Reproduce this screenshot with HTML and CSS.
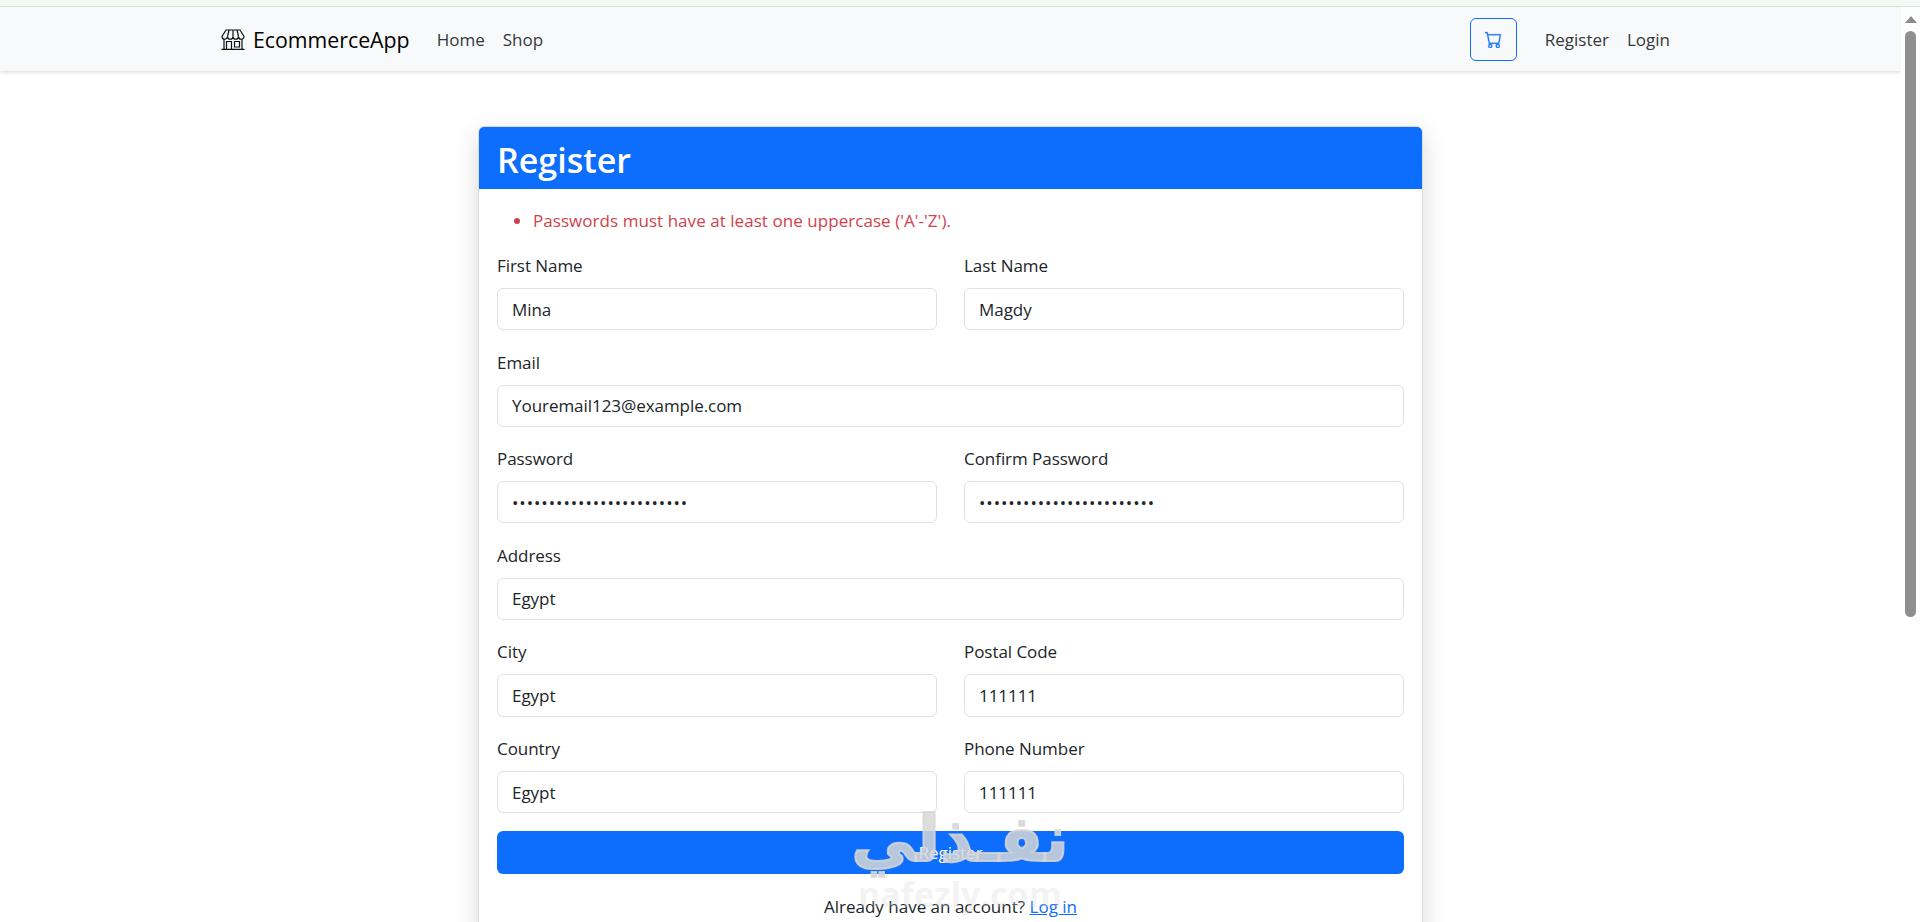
FILE: index.html
```html
<!DOCTYPE html>
<html lang="en">
<head>
<meta charset="UTF-8">
<meta name="viewport" content="width=device-width, initial-scale=1.0">
<title>Register | EcommerceApp</title>
<link rel="stylesheet" href="styles.css">
</head>
<body>
    <div class="top-strip"></div>
    <div class="window">
        <div class="page">
            <nav class="navbar">
                <a href="#" class="brand">
                    <svg class="brand-icon" viewBox="0 0 24 21" fill="none" stroke="#111" stroke-width="1.2">
                        <path d="M5 1h14l4 6.500a2.750 2.750 0 0 1-5.500 0 2.750 2.750 0 0 1-5.500 0 2.750 2.750 0 0 1-5.500 0 2.750 2.750 0 0 1-5.500 0z"/>
                        <path d="M6.500 7.500 8 1M12 7.500V1M17.500 7.500 16 1"/>
                        <path d="M3 10v10M21 10v10M0.500 20.400h23"/>
                        <path d="M5.500 20v-7.500h5V20M13.500 12.500h5v5.500h-5z"/>
                    </svg>
                    EcommerceApp
                </a>
                <a href="#" class="nav-link">Home</a>
                <a href="#" class="nav-link">Shop</a>
                <a href="#" class="cart-button">
                    <svg width="17" height="17" viewBox="0 0 16 16" fill="currentColor" stroke="currentColor" stroke-width="0.25">
                        <path d="M0 1.500A.5.5 0 0 1 .5 1H2a.5.5 0 0 1 .485.379L2.890 3H14.500a.5.5 0 0 1 .491.592l-1.500 8A.5.5 0 0 1 13 12H4a.5.5 0 0 1-.491-.408L2.010 3.607 1.610 2H.5a.5.5 0 0 1-.5-.5M3.102 4l1.313 7h8.170l1.313-7zM5 12a2 2 0 1 0 0 4 2 2 0 0 0 0-4m7 0a2 2 0 1 0 0 4 2 2 0 0 0 0-4m-7 1a1 1 0 1 1 0 2 1 1 0 0 1 0-2m7 0a1 1 0 1 1 0 2 1 1 0 0 1 0-2"/>
                    </svg>
                </a>
                <a href="#" class="nav-link">Register</a>
                <a href="#" class="nav-link">Login</a>
            </nav>

            <div class="card">
                <div class="card-header">
                    <h2>Register</h2>
                </div>
                <div class="card-body">
                    <ul class="errors">
                        <li>Passwords must have at least one uppercase ('A'-'Z').</li>
                    </ul>
                    <form class="register-form">
                        <div class="field">
                            <label for="first">First Name</label>
                            <input type="text" id="first" value="Mina">
                        </div>
                        <div class="field">
                            <label for="last">Last Name</label>
                            <input type="text" id="last" value="Magdy">
                        </div>
                        <div class="field wide">
                            <label for="email">Email</label>
                            <input type="email" id="email" value="Youremail123@example.com">
                        </div>
                        <div class="field">
                            <label for="password">Password</label>
                            <input type="password" id="password" value="Youremail123@example.com">
                        </div>
                        <div class="field">
                            <label for="confirm">Confirm Password</label>
                            <input type="password" id="confirm" value="Youremail123@example.com">
                        </div>
                        <div class="field wide">
                            <label for="address">Address</label>
                            <input type="text" id="address" value="Egypt">
                        </div>
                        <div class="field">
                            <label for="city">City</label>
                            <input type="text" id="city" value="Egypt">
                        </div>
                        <div class="field">
                            <label for="postal">Postal Code</label>
                            <input type="text" id="postal" value="111111">
                        </div>
                        <div class="field">
                            <label for="country">Country</label>
                            <input type="text" id="country" value="Egypt">
                        </div>
                        <div class="field">
                            <label for="phone">Phone Number</label>
                            <input type="text" id="phone" value="111111">
                        </div>
                        <button type="button" class="register-button wide">Register</button>
                    </form>
                    <p class="login-redirect">Already have an account? <a href="#">Log in</a></p>
                </div>
            </div>
        </div>

        <div class="scrollbar">
            <span class="scroll-arrow"></span>
            <span class="scroll-thumb"></span>
        </div>
    </div>

    <div class="watermark">
        <span class="watermark-logo" dir="rtl" lang="ar">نفـذلي</span>
        <span class="watermark-site">nafezly.com</span>
    </div>
</body>
</html>
```

FILE: styles.css
```css
html, body {
    height: 100%;
}

body {
    margin: 0;
    display: flex;
    flex-direction: column;
    overflow: hidden;
    background: #fff;
    color: #212529;
    font-family: "Open Sans", "Noto Sans", sans-serif;
    font-size: 17px;
}

a {
    text-decoration: none;
}

.top-strip {
    flex: none;
    height: 6px;
    background: #f3faf6;
    border-bottom: 1px solid #d5e3df;
}

.window {
    flex: 1;
    min-height: 0;
    display: flex;
}

.page {
    flex: 1;
    min-width: 0;
    overflow: hidden;
}

/* navbar */
.navbar {
    height: 64px;
    padding: 0 231px 0 221px;
    display: flex;
    align-items: center;
    background: #f8f9fa;
    box-shadow: 0 1px 4px rgba(0, 0, 0, 0.16);
}

.brand {
    display: flex;
    align-items: center;
    gap: 8px;
    margin-right: 27px;
    color: #000;
    font-size: 21.3px;
}

.brand-icon {
    width: 24px;
    height: 21px;
}

.nav-link {
    margin-right: 18px;
    color: #34383d;
}

.cart-button {
    width: 47px;
    height: 43px;
    box-sizing: border-box;
    margin-left: auto;
    margin-right: 28px;
    display: flex;
    align-items: center;
    justify-content: center;
    border: 1px solid #0d6efd;
    border-radius: 6px;
    color: #0d6efd;
}

.navbar .nav-link:last-child {
    margin-right: 0;
}

/* card */
.card {
    width: 945px;
    box-sizing: border-box;
    margin: 55px auto 0;
    border: 1px solid #dcdcdc;
    border-radius: 6px;
    box-shadow: 0 8px 24px rgba(0, 0, 0, 0.15);
}

.card-header {
    height: 62px;
    box-sizing: border-box;
    padding: 3px 18px 0;
    display: flex;
    align-items: center;
    background: #0d6efd;
    border-radius: 5px 5px 0 0;
    color: #fff;
}

.card-header h2 {
    margin: 0;
    font-size: 34px;
    font-weight: 600;
}

.card-body {
    padding: 19px 18px;
}

.errors {
    margin: 0 0 19px;
    padding-left: 36px;
    color: #d13f4d;
    line-height: 26px;
    letter-spacing: 0.05px;
}

.register-form {
    display: grid;
    grid-template-columns: 1fr 1fr;
    column-gap: 27px;
    row-gap: 19.3px;
}

.field {
    display: flex;
    flex-direction: column;
    letter-spacing: -0.05px;
}

.wide {
    grid-column: 1 / -1;
}

label {
    line-height: 26px;
    margin-bottom: 9px;
}

input {
    height: 42.3px;
    box-sizing: border-box;
    padding: 0 14px;
    border: 1px solid #dee2e6;
    border-radius: 6px;
    outline: none;
    background: #fff;
    color: #212529;
    font: inherit;
    letter-spacing: inherit;
}

input[type="password"] {
    letter-spacing: 0.95px;
}

.register-button {
    height: 43px;
    margin-top: -2px;
    border: none;
    border-radius: 6px;
    background: #0d6efd;
    color: #fff;
    font: inherit;
}

.login-redirect {
    margin: 20px 0 0;
    text-align: center;
    line-height: 26px;
}

.login-redirect a {
    color: #0d6efd;
    text-decoration: underline;
}

/* browser scrollbar */
.scrollbar {
    flex: none;
    width: 19px;
    display: flex;
    flex-direction: column;
    align-items: center;
    background: #fff;
}

.scroll-arrow {
    margin-top: 9px;
    border-left: 6px solid transparent;
    border-right: 6px solid transparent;
    border-bottom: 7px solid #8c8c8c;
}

.scroll-thumb {
    width: 11px;
    height: 586px;
    margin-top: 8px;
    border-radius: 6px;
    background: #8f8f8f;
}

/* site watermark over the screenshot */
.watermark {
    position: absolute;
    left: 820px;
    top: 804px;
    width: 280px;
    display: flex;
    flex-direction: column;
    align-items: center;
    color: rgba(215, 215, 215, 0.84);
    pointer-events: none;
}

.watermark-logo {
    font-family: "DejaVu Sans", sans-serif;
    font-size: 64px;
    font-weight: 700;
    line-height: 70px;
    -webkit-text-stroke: 2px rgba(215, 215, 215, 0.84);
}

.watermark-site {
    font-family: "Open Sans", sans-serif;
    font-size: 34px;
    font-weight: 700;
    line-height: 40px;
    color: rgba(215, 215, 215, 0.3);
}
```
